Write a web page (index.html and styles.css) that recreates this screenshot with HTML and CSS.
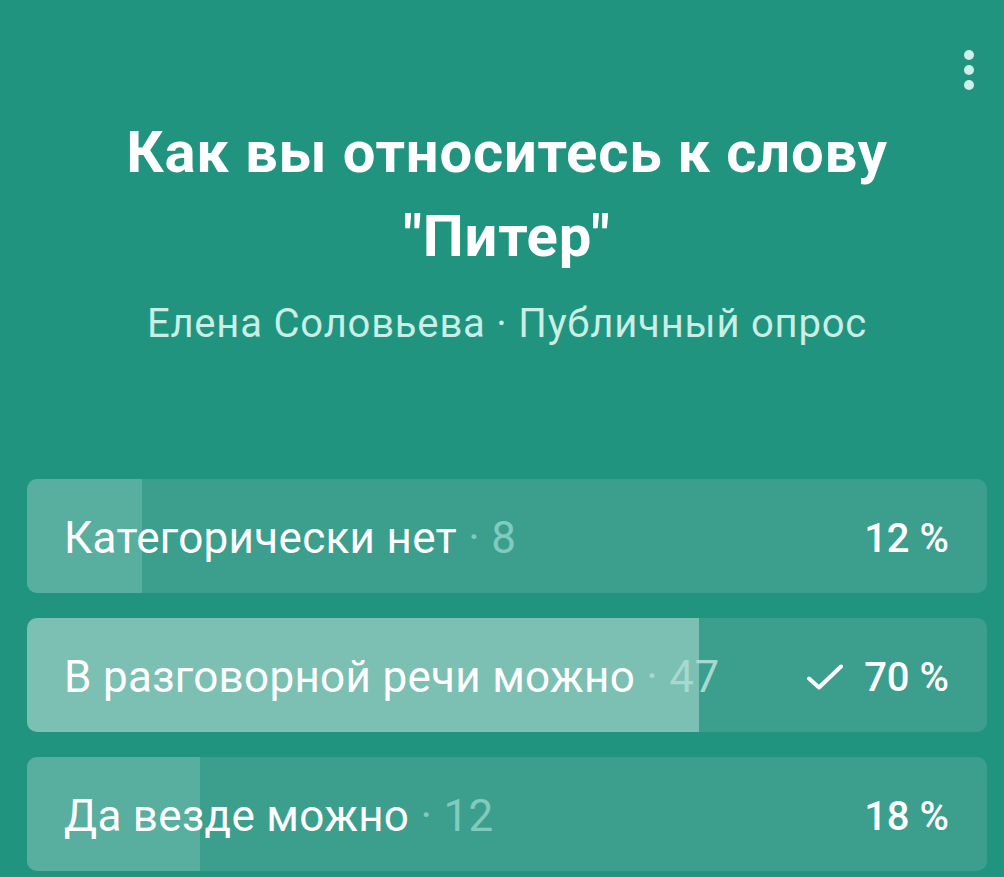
FILE: index.html
```html
<!DOCTYPE html>
<html lang="ru">
<head>
<meta charset="utf-8">
<link rel="stylesheet" href="styles.css">
</head>
<body>
<div class="card">
  <div class="menu"><span></span><span></span><span></span></div>
  <h1 class="title">Как вы относитесь к слову "Питер"</h1>
  <div class="sub">Елена Соловьева · Публичный опрос</div>
  <div class="options">
    <div class="opt">
      <div class="fill" style="width:12%"></div>
      <div class="label">Категорически нет<span class="cnt"> · 8</span></div>
      <div class="pct">12 %</div>
    </div>
    <div class="opt mine">
      <div class="fill" style="width:70%"></div>
      <div class="label">В разговорной речи можно<span class="cnt"> · 47</span></div>
      <div class="pct"><svg class="check" viewBox="0 0 38 26"><path d="M3 14.5L13 23.5L35 2.5"/></svg>70 %</div>
    </div>
    <div class="opt">
      <div class="fill" style="width:18%"></div>
      <div class="label">Да везде можно<span class="cnt"> · 12</span></div>
      <div class="pct">18 %</div>
    </div>
  </div>
</div>
</body>
</html>
```
FILE: styles.css
```css
html, body { margin: 0; padding: 0; }
body {
  background: #20947f;
  font-family: Roboto, "Noto Sans", sans-serif;
  width: 1004px;
  height: 877px;
  overflow: hidden;
}
.card {
  position: relative;
  padding: 110px 17px 0 27px;
}
.menu {
  position: absolute;
  top: 50px;
  right: 30px;
  display: flex;
  flex-direction: column;
  gap: 5px;
}
.menu span {
  width: 10px;
  height: 10px;
  border-radius: 50%;
  background: #cdf0e8;
}
.title {
  margin: 0 auto;
  width: 820px;
  text-align: center;
  color: #fff;
  font-size: 58px;
  font-weight: 700;
  line-height: 84px;
  letter-spacing: 0.8px;
}
.sub {
  margin-top: 22px;
  text-align: center;
  color: #c8eee5;
  font-size: 40px;
  letter-spacing: 0.8px;
}
.options {
  margin-top: 132px;
  display: flex;
  flex-direction: column;
  gap: 25px;
}
.opt {
  position: relative;
  height: 114px;
  box-sizing: border-box;
  border-radius: 10px;
  background: #3c9f8e;
  overflow: hidden;
  display: flex;
  align-items: center;
  padding: 4px 38px 0 37px;
}
.fill {
  position: absolute;
  left: 0; top: 0; bottom: 0;
  background: #58ae9f;
}
.mine .fill { background: #7cc0b4; }
.label {
  position: relative;
  flex: 1;
  color: #fff;
  font-size: 44px;
  letter-spacing: 0.3px;
}
.cnt { color: #80cbbd; }
.mine .cnt { color: #a6d9cf; }
.pct {
  position: relative;
  color: #fff;
  font-size: 40px;
  font-weight: 500;
  display: flex;
  align-items: center;
}
.check {
  width: 38px;
  height: 26px;
  margin-right: 20px;
  fill: none;
  stroke: #fff;
  stroke-width: 4;
  stroke-linecap: round;
  stroke-linejoin: round;
}
```
